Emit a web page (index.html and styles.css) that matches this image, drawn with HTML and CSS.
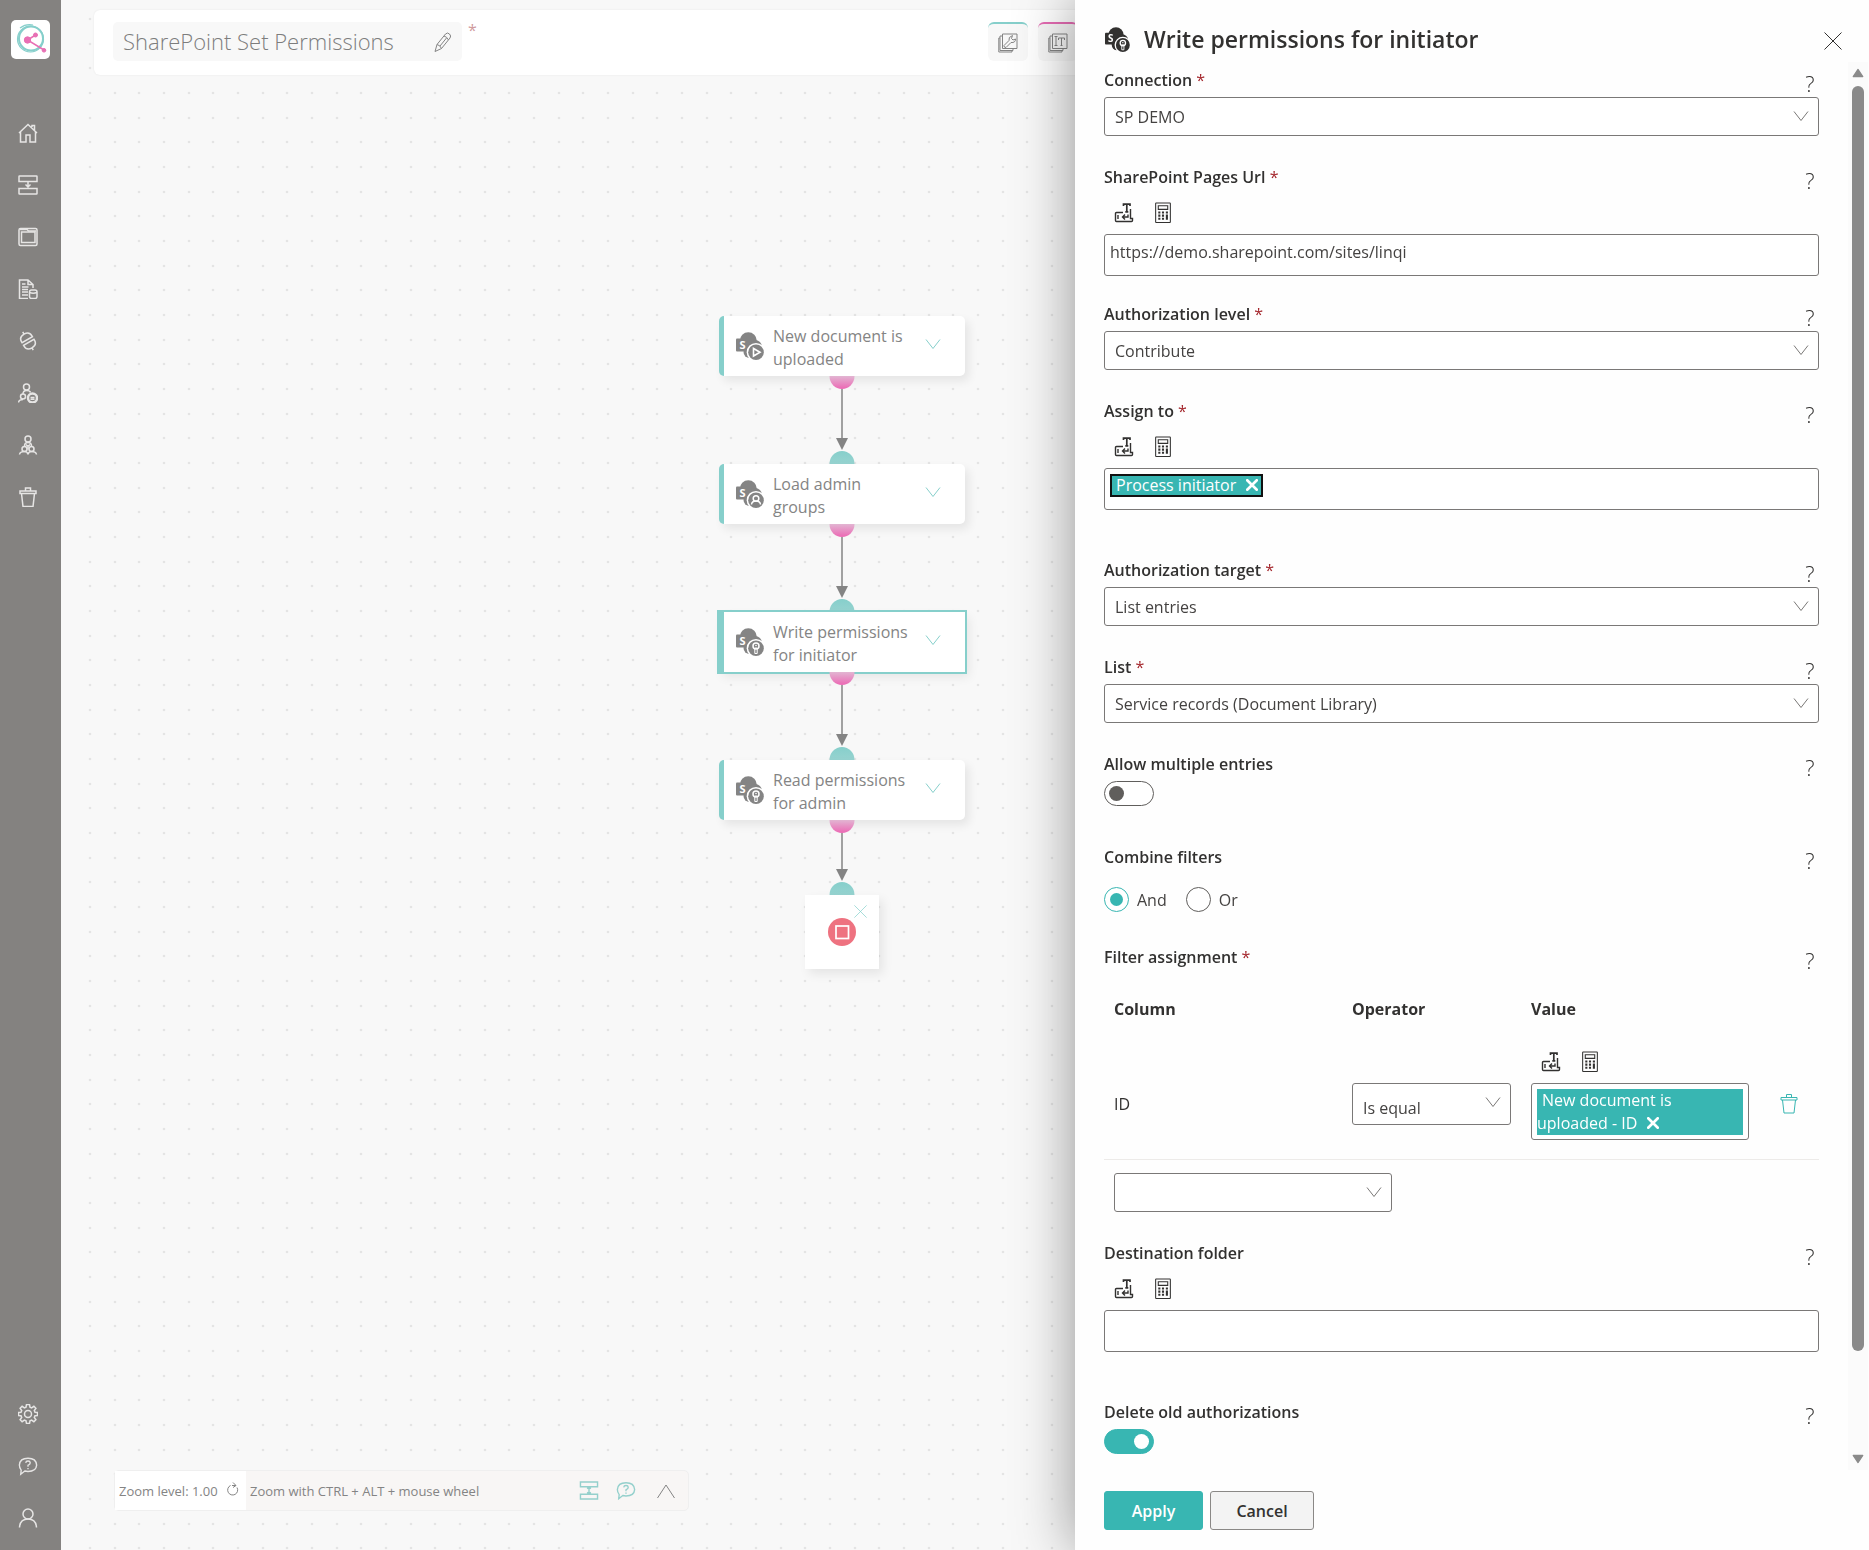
FILE: index.html
```html
<!DOCTYPE html>
<html lang="en">
<head>
<meta charset="utf-8">
<meta name="viewport" content="width=device-width, initial-scale=1">
<title>SharePoint Set Permissions</title>
<link rel="stylesheet" href="styles.css">
</head>
<body>
<svg class="icons" aria-hidden="true">
  <symbol id="i-home" viewBox="0 0 20 20"><path d="M1 10 10 1.500 19 10M2.500 9v10H8v-7h4v7h5.500V9M14 4V2.500h2.500V7"/></symbol>
  <symbol id="i-flow" viewBox="0 0 20 20"><path d="M1.500 1h17q.500 0 .500.500v5H1v-5q0-.500.500-.500zM1 13.500h18v5q0 .500-.500.500h-17q-.500 0-.500-.500zM10 6.500v6M7.500 9.500 10 12l2.500-2.500"/></symbol>
  <symbol id="i-flow2" viewBox="0 0 20 20"><path d="M1 1h18v5H1zM1 14h18v5H1zM10 6v8M8 8l2-1.500L12 8M8 12l2 1.500 2-1.500"/></symbol>
  <symbol id="i-frame" viewBox="0 0 20 20"><rect x="1" y="1.500" width="18" height="17" rx="1.500"/><rect x="3.500" y="5" width="13.500" height="10.500"/><path d="M2 2.500h7l1.500 1.500H18"/></symbol>
  <symbol id="i-doc" viewBox="0 0 20 20"><path d="M10 19.500H1.500V1H10l5 4.500V9M10 1v4.500h5M4 5h3.500M4 8h6.500M4 10.500h6M4 13h6M4 16h6"/><rect x="11.500" y="11" width="7.500" height="8.500" rx="2"/><path d="M11.500 13.500q3.700 1.500 7.500 0"/></symbol>
  <symbol id="i-plug" viewBox="0 0 20 20"><g transform="rotate(-30 10 10)"><path d="M4 8.500V7.500Q4 2 10 2t6 5.500v1zM4 11.500v1Q4 18 10 18t6-5.500v-1zM10 2v-2.500M10 18v2.500"/></g></symbol>
  <symbol id="i-team" viewBox="0 0 20 20"><circle cx="10" cy="4" r="3"/><path d="M6.500 11Q6.500 7.500 10 7.500t3.500 3.500M8 9.500l2 2 2-2M10 11.500v3"/><circle cx="6.500" cy="14" r="2.500"/><circle cx="13.500" cy="14" r="2.500"/><path d="M1.500 19.500q.500-3 5-3 3 0 3.500 3 .500-3 3.500-3 4.500 0 5 3"/></symbol>
  <symbol id="i-teamgear" viewBox="0 0 20 20"><circle cx="8.500" cy="4" r="3"/><path d="M5 11q0-3.500 3.500-3.500t4 2"/><circle cx="5" cy="13.500" r="2.500"/><path d="M.500 19.500q.500-3 4.500-3"/><circle cx="14.500" cy="15" r="4.500" stroke-width="2.500"/><path d="M12.500 14.500h4M12.500 16.200h4"/></symbol>
  <symbol id="i-trash" viewBox="0 0 20 20"><path d="M2 4h16v2.500H2zM3.500 6.500l1.500 13h10l1.500-13M7.500 4V1h5v3"/></symbol>
  <symbol id="i-gear" viewBox="0 0 20 20"><circle cx="10" cy="10" r="3.500"/><path d="M8.500.500h3l.500 2.700 1.600.700 2.300-1.600 2 2-1.600 2.300.700 1.600 2.500.300v3l-2.500.300-.700 1.600 1.600 2.300-2 2-2.300-1.600-1.600.700-.500 2.700h-3L8 16.800l-1.600-.700-2.300 1.600-2-2 1.600-2.300L3 11.800.500 11.500v-3L3 8.200l.700-1.600L2.100 4.300l2-2 2.300 1.600L8 3.200z"/></symbol>
  <symbol id="i-chat" viewBox="0 0 22 20"><path d="M3.500 14.500Q1.500 12 1.500 9 2 1.500 11 1.500T20.500 9q-.500 7-9.500 7-2 0-3.500-.500L3 19z"/><path d="M8.500 6.500Q8.700 4.500 11 4.500t2.500 2Q13.500 8 11 9.200v1.500M11 12.300v1.200"/></symbol>
  <symbol id="i-user" viewBox="0 0 20 20"><circle cx="10" cy="6" r="5"/><path d="M1.500 19.500Q2 11 10 11t8.500 8.500"/></symbol>
  <symbol id="i-pencil" viewBox="0 0 18 20"><path d="M1 19.500 3 12.500 11.500 2q2-2 4 0t.500 4L7.500 16.500zM3 12.500q3 .500 4.500 4M10 4q3 .700 4.500 4M12.500 6 6 14"/></symbol>
  <symbol id="i-tool" viewBox="0 0 20 20"><path d="M4.500 1h14.500v14.500H4.500zM4.500 3H2v14.500h13v-2M2 5H.800v14h13.200v-1.500M6 12.500 11 7.500M8 14.500l5-5M6 12.500q-.500 2 2 2M11 7.500q-1-3.500 3.500-5L13.500 5.500l1.500 1.500L17.500 6q0 4-4.500 3.500"/></symbol>
  <symbol id="i-text" viewBox="0 0 20 20"><path d="M4.500 1h14.500v14.500H4.500zM4.500 3H2v14.500h13v-2M2 5H.800v14h13.200v-1.500M6.500 3.500h3M8 3.500v9M6.500 12.500h3M10.500 7V5h6v2M13.500 5v7.500M12.500 12.500h2"/></symbol>
  <symbol id="i-token" viewBox="0 0 20 20"><path d="M9.500 3.500V1.700h6.500v1.800M12.800 1.700v7.800M11.300 9.300h3" stroke-width="1.700"/><path d="M9 10H2.500Q1.500 10 1.500 11v7q0 1 1 1h15q1 0 1-1v-2h-2V6.500M4 12.500V16.500M14 12v2.500H8.500M11 12 8.500 14.500l2.500 2.500" stroke-width="1.400"/></symbol>
  <symbol id="i-calc" viewBox="0 0 16 20"><rect x="1" y="1" width="14" height="18.500" rx=".5"/><path d="M3.500 3.500h9v3.500h-9z"/><path d="M3.500 10h2M7 10h2M10.700 10h2M3.500 13h2M7 13h2M3.500 16h2M7 16h2M11.700 12v5" stroke-width="2"/></symbol>
  <symbol id="i-down" viewBox="0 0 16 10"><path d="M1 .500 8 9.500 15 .500"/></symbol>
  <symbol id="i-up" viewBox="0 0 20 16"><path d="M1.500 15 10 2l8.500 13"/></symbol>
  <symbol id="i-close" viewBox="0 0 18 18"><path d="M.500.500 17.500 17.500M17.500.500.500 17.500"/></symbol>
  <symbol id="i-reload" viewBox="0 0 14 14"><path d="M4.500 3.500A5 5 0 1 0 11 5.500M7 .500l3 3-3 2M10 3.500H6"/></symbol>
  <symbol id="i-sp" viewBox="0 0 28 28">
    <circle cx="12.300" cy="8.700" r="8.500" fill="currentColor" stroke="none"/>
    <circle cx="19" cy="15" r="7" fill="currentColor" stroke="none"/>
    <circle cx="13.500" cy="20" r="6" fill="currentColor" stroke="none"/>
    <rect y="6.500" width="10.500" height="13" rx="1" fill="currentColor" stroke="none"/>
    <circle cx="20" cy="20.200" r="9.300" fill="#fff" stroke="none"/>
    <circle cx="20" cy="20.200" r="7.800" fill="currentColor" stroke="none"/>
    <text x="6.500" y="17" class="sp-letter">S</text>
  </symbol>
  <symbol id="i-key" viewBox="0 0 28 28"><circle cx="20" cy="18" r="3" fill="none" stroke="#fff" stroke-width="1.500"/><path d="M18.800 20v5.500h2.400V20z" fill="none" stroke="#fff" stroke-width="1"/><circle cx="20" cy="17.500" r=".8" fill="#fff" stroke="none"/></symbol>
  <symbol id="i-play" viewBox="0 0 28 28"><path d="M17.500 16.500v7.500l6.500-3.700z" fill="none" stroke="#fff" stroke-width="1.600"/></symbol>
  <symbol id="i-person" viewBox="0 0 28 28"><circle cx="20" cy="18.500" r="2.800" fill="none" stroke="#fff" stroke-width="1.500"/><path d="M15.500 24.500q.5-3.500 4.500-3.500t4.500 3.500" fill="none" stroke="#fff" stroke-width="1.500"/></symbol>
</svg>

<div class="app">
  <nav class="rail" aria-label="Main">
    <a class="logo" href="#" aria-label="Start">
      <svg viewBox="0 0 39 39"><g fill="none" stroke="#86cfcb"><circle cx="20" cy="18.500" r="12" stroke-width="2"/><circle cx="19.500" cy="19" r="13" stroke-width="1.200"/><path d="M9 8Q15 3.500 22 5" stroke-width="1.200"/></g><g stroke="#e86fb4" fill="#e86fb4"><path d="M24.500 15 16.500 20 33 30" fill="none" stroke-width="1.500"/><circle cx="16.500" cy="20" r="3.200"/><circle cx="24.500" cy="15" r="2"/><circle cx="33" cy="30.300" r="1.800"/></g></svg>
    </a>
    <div class="rail-group">
      <a href="#" aria-label="Home"><svg><use href="#i-home"/></svg></a>
      <a href="#" aria-label="Processes"><svg><use href="#i-flow"/></svg></a>
      <a href="#" aria-label="Forms"><svg><use href="#i-frame"/></svg></a>
      <a href="#" aria-label="Data"><svg><use href="#i-doc"/></svg></a>
      <a href="#" aria-label="Connections"><svg><use href="#i-plug"/></svg></a>
      <a href="#" aria-label="Group settings"><svg><use href="#i-teamgear"/></svg></a>
      <a href="#" aria-label="Groups"><svg><use href="#i-team"/></svg></a>
      <a href="#" aria-label="Trash"><svg><use href="#i-trash"/></svg></a>
    </div>
    <div class="rail-group rail-bottom">
      <a href="#" aria-label="Settings"><svg><use href="#i-gear"/></svg></a>
      <a href="#" aria-label="Help"><svg><use href="#i-chat"/></svg></a>
      <a href="#" aria-label="Account"><svg><use href="#i-user"/></svg></a>
    </div>
  </nav>

  <main class="stage">
    <svg class="dots" aria-hidden="true">
      <defs><pattern id="grid" width="74" height="74" patternUnits="userSpaceOnUse" x="0" y="6">
        <g fill="#e4e4e4"><circle cx="13" cy="13" r="1.300"/><circle cx="38" cy="13" r="1.300"/><circle cx="62" cy="13" r="1.300"/><circle cx="13" cy="38" r="1.300"/><circle cx="38" cy="38" r="1.300"/><circle cx="62" cy="38" r="1.300"/><circle cx="13" cy="62" r="1.300"/><circle cx="38" cy="62" r="1.300"/><circle cx="62" cy="62" r="1.300"/></g>
      </pattern></defs>
      <rect width="100%" height="100%" fill="url(#grid)"/>
    </svg>

    <header class="topbar">
      <div class="title-box">
        <h1>SharePoint Set Permissions</h1>
        <button type="button" aria-label="Rename"><svg><use href="#i-pencil"/></svg></button>
      </div>
      <span class="unsaved">*</span>
      <div class="tools">
        <button type="button" class="tool teal" aria-label="Tools"><svg><use href="#i-tool"/></svg></button>
        <button type="button" class="tool pink" aria-label="Texts"><svg><use href="#i-text"/></svg></button>
      </div>
    </header>

    <div class="flow">
      <svg class="shared" aria-hidden="true">
        <defs>
          <linearGradient id="pink" x1="0" y1="0" x2="0" y2="1"><stop offset="0" stop-color="#e2b5d2"/><stop offset="1" stop-color="#ec68b4"/></linearGradient>
          <linearGradient id="teal" x1="0" y1="0" x2="0" y2="1"><stop offset="0" stop-color="#86cfcb"/><stop offset="1" stop-color="#97d3d0"/></linearGradient>
        </defs>
        <symbol id="link-art" viewBox="0 0 26 88">
          <path d="M13 13v50" stroke="#848484" stroke-width="1.500"/><path d="M7 62h12l-6 12z" fill="#848484"/>
          <path d="M.500 0h25a12.500 13 0 0 1-25 0z" fill="url(#pink)"/><path d="M.500 88a12.500 13 0 0 1 25 0z" fill="url(#teal)"/>
        </symbol>
      </svg>
      <article class="node n1"><svg class="sp"><use href="#i-sp"/><use href="#i-play"/></svg><span>New document is uploaded</span><svg class="chev"><use href="#i-down"/></svg></article>
      <svg class="link l1" viewBox="0 0 26 88"><use href="#link-art"/></svg>
      <article class="node n2"><svg class="sp"><use href="#i-sp"/><use href="#i-person"/></svg><span>Load admin groups</span><svg class="chev"><use href="#i-down"/></svg></article>
      <svg class="link l2" viewBox="0 0 26 88"><use href="#link-art"/></svg>
      <article class="node n3 selected"><svg class="sp"><use href="#i-sp"/><use href="#i-key"/></svg><span>Write permissions for initiator</span><svg class="chev"><use href="#i-down"/></svg></article>
      <svg class="link l3" viewBox="0 0 26 88"><use href="#link-art"/></svg>
      <article class="node n4"><svg class="sp"><use href="#i-sp"/><use href="#i-key"/></svg><span>Read permissions for admin</span><svg class="chev"><use href="#i-down"/></svg></article>
      <svg class="link l4" viewBox="0 0 26 75">
        <path d="M13 13v38" stroke="#848484" stroke-width="1.500"/><path d="M7 49h12l-6 12z" fill="#848484"/>
        <path d="M.500 0h25a12.500 13 0 0 1-25 0z" fill="url(#pink)"/><path d="M.500 75a12.500 13 0 0 1 25 0z" fill="url(#teal)"/>
      </svg>
      <article class="end-node">
        <button type="button" aria-label="Remove"><svg><use href="#i-close"/></svg></button>
        <svg class="stop" viewBox="0 0 28 28"><circle cx="14" cy="14" r="14" fill="#ee7280"/><rect x="8" y="8" width="12.500" height="12.500" fill="none" stroke="#fff" stroke-width="1.700"/></svg>
      </article>
    </div>

    <footer class="zoombar">
      <div class="zoom-level"><span>Zoom level: 1.00</span><button type="button" aria-label="Reset zoom"><svg><use href="#i-reload"/></svg></button></div>
      <span class="zoom-hint">Zoom with CTRL + ALT + mouse wheel</span>
      <button type="button" class="zb" aria-label="Arrange"><svg><use href="#i-flow2"/></svg></button>
      <button type="button" class="zb" aria-label="Comments"><svg><use href="#i-chat"/></svg></button>
      <button type="button" class="zb last" aria-label="Expand"><svg><use href="#i-up"/></svg></button>
    </footer>
  </main>

  <aside class="panel" aria-labelledby="panel-title">
    <header class="panel-head">
      <svg class="panel-icon"><use href="#i-sp"/><use href="#i-key"/></svg>
      <h2 id="panel-title">Write permissions for initiator</h2>
      <button type="button" class="close" aria-label="Close"><svg><use href="#i-close"/></svg></button>
    </header>

    <div class="panel-scroll">
      <form class="form" id="settings">
        <div class="field">
          <div class="label-row"><label for="connection">Connection <i>*</i></label><button type="button" class="help">?</button></div>
          <div class="select"><select id="connection"><option>SP DEMO</option></select><svg><use href="#i-down"/></svg></div>
        </div>

        <div class="field text-field">
          <div class="label-row"><label for="url">SharePoint Pages Url <i>*</i></label><button type="button" class="help">?</button></div>
          <div class="inserts"><button type="button" aria-label="Insert token"><svg><use href="#i-token"/></svg></button><button type="button" aria-label="Insert formula"><svg><use href="#i-calc"/></svg></button></div>
          <input class="editor" id="url" type="text" value="https://demo.sharepoint.com/sites/linqi">
        </div>

        <div class="field">
          <div class="label-row"><label for="level">Authorization level <i>*</i></label><button type="button" class="help">?</button></div>
          <div class="select"><select id="level"><option>Contribute</option></select><svg><use href="#i-down"/></svg></div>
        </div>

        <div class="field roomy">
          <div class="label-row"><span id="assign">Assign to <i>*</i></span><button type="button" class="help">?</button></div>
          <div class="inserts"><button type="button" aria-label="Insert token"><svg><use href="#i-token"/></svg></button><button type="button" aria-label="Insert formula"><svg><use href="#i-calc"/></svg></button></div>
          <div class="editor" role="textbox" aria-labelledby="assign" tabindex="0"><span class="token framed">Process initiator<button type="button" aria-label="Remove"><svg><use href="#i-close"/></svg></button></span></div>
        </div>

        <div class="field">
          <div class="label-row"><label for="target">Authorization target <i>*</i></label><button type="button" class="help">?</button></div>
          <div class="select"><select id="target"><option>List entries</option></select><svg><use href="#i-down"/></svg></div>
        </div>

        <div class="field">
          <div class="label-row"><label for="list">List <i>*</i></label><button type="button" class="help">?</button></div>
          <div class="select"><select id="list"><option>Service records (Document Library)</option></select><svg><use href="#i-down"/></svg></div>
        </div>

        <div class="field switch-field">
          <div class="label-row"><label for="multi">Allow multiple entries</label><button type="button" class="help">?</button></div>
          <input class="toggle" id="multi" type="checkbox">
        </div>

        <div class="field radio-field" role="radiogroup" aria-labelledby="combine">
          <div class="label-row"><span id="combine">Combine filters</span><button type="button" class="help">?</button></div>
          <div class="radios">
            <label><input type="radio" name="combine" checked>And</label>
            <label><input type="radio" name="combine">Or</label>
          </div>
        </div>

        <div class="field">
          <div class="label-row"><span id="filter">Filter assignment <i>*</i></span><button type="button" class="help">?</button></div>
          <table class="filters" aria-labelledby="filter">
            <colgroup><col class="c-col"><col class="c-op"><col class="c-val"><col></colgroup>
            <thead><tr><th>Column</th><th>Operator</th><th>Value</th><th></th></tr></thead>
            <tbody><tr>
              <td class="low">ID</td>
              <td class="low"><div class="select tall"><select aria-label="Operator"><option>Is equal</option></select><svg><use href="#i-down"/></svg></div></td>
              <td>
                <div class="inserts"><button type="button" aria-label="Insert token"><svg><use href="#i-token"/></svg></button><button type="button" aria-label="Insert formula"><svg><use href="#i-calc"/></svg></button></div>
                <div class="editor value" role="textbox" aria-label="Value" tabindex="0"><span class="token block">New document is uploaded - ID<button type="button" aria-label="Remove"><svg><use href="#i-close"/></svg></button></span></div>
              </td>
              <td class="low"><button type="button" class="delete" aria-label="Delete row"><svg><use href="#i-trash"/></svg></button></td>
            </tr></tbody>
          </table>
          <div class="select add"><select aria-label="Add column"><option></option></select><svg><use href="#i-down"/></svg></div>
        </div>

        <div class="field roomy">
          <div class="label-row"><label for="folder">Destination folder</label><button type="button" class="help">?</button></div>
          <div class="inserts"><button type="button" aria-label="Insert token"><svg><use href="#i-token"/></svg></button><button type="button" aria-label="Insert formula"><svg><use href="#i-calc"/></svg></button></div>
          <input class="editor" id="folder" type="text">
        </div>

        <div class="field last">
          <div class="label-row"><label for="old">Delete old authorizations</label><button type="button" class="help">?</button></div>
          <input class="toggle" id="old" type="checkbox" checked>
        </div>
      </form>
      <div class="scrollbar" aria-hidden="true">
        <svg viewBox="0 0 10 8"><path d="M5 1 9 7H1z"/></svg>
        <div class="track"><div class="thumb"></div></div>
        <svg viewBox="0 0 10 8"><path d="M5 7 9 1H1z"/></svg>
      </div>
    </div>

    <footer class="panel-foot">
      <button class="btn primary" type="submit" form="settings">Apply</button>
      <button class="btn" type="button">Cancel</button>
    </footer>
  </aside>
</div>
</body>
</html>
```
FILE: styles.css
```css
* { box-sizing: border-box; }

body {
  margin: 0;
  font-family: "Open Sans", "Noto Sans", sans-serif;
  font-size: 16px;
  color: #323130;
  background: #f8f8f8;
}

button, input, select { font: inherit; color: inherit; }
button { padding: 0; border: 0; background: none; display: flex; align-items: center; justify-content: center; }
svg { display: block; fill: none; stroke: currentColor; flex: none; }
h1, h2 { margin: 0; }
.icons { display: none; }
.shared { position: absolute; width: 0; height: 0; }
.sp-letter { font: 700 11px "Open Sans", sans-serif; fill: #fff; stroke: none; text-anchor: middle; }

.app { display: flex; min-height: 100vh; }

/* left rail */
.rail {
  width: 61px;
  flex: none;
  background: #848280;
  color: #e6e5e4;
  display: flex;
  flex-direction: column;
  padding: 20px 0 6px;
}
.logo { width: 39px; height: 39px; margin: 0 0 48px 11px; background: #fff; border-radius: 5px; }
.logo svg { width: 39px; height: 39px; }
.rail-group a { display: flex; align-items: center; width: 56px; height: 52px; justify-content: center; color: inherit; }
.rail-group svg { width: 20px; height: 20px; stroke-width: 1.5; overflow: visible; }
.rail-bottom { margin-top: auto; }

/* designer */
.stage { flex: 1; position: relative; min-width: 0; display: flex; flex-direction: column; overflow: hidden; color: #848484; }
.dots { position: absolute; top: 0; left: 16px; width: 100%; height: 100%; stroke: none; }
.topbar {
  position: relative;
  display: flex;
  align-items: flex-start;
  height: 65px;
  margin: 10px 0 0 33px;
  padding: 12px 0 0 19px;
  background: #fff;
  border-radius: 6px 0 0 6px;
  box-shadow: 0 0 2px rgba(0, 0, 0, .08);
}
.title-box { display: flex; align-items: center; justify-content: space-between; width: 349px; height: 39px; padding: 0 10px; background: #f8f8f8; border-radius: 5px; }
h1 { font-size: 22px; font-weight: 300; line-height: 41px; white-space: nowrap; color: #7d7d7d; }
.title-box svg { width: 18px; height: 20px; }
.unsaved { margin-left: 6px; font-size: 16px; line-height: 16px; color: #cf9a9d; width: 10px; }
.tools { display: flex; gap: 10px; margin-left: 510px; }
.tool { width: 40px; height: 39px; background: #f8f8f8; border-top: 2px solid; border-radius: 6px; }
.tool svg { width: 20px; height: 20px; color: #848484; }
.tool.teal { border-color: #86cfcb; }
.tool.pink { border-color: #e56cb3; }

.flow { flex: 1; position: relative; }
.node {
  position: absolute;
  left: 658px;
  width: 246px;
  height: 60px;
  padding-left: 12px;
  display: flex;
  align-items: center;
  border-left: 5px solid #86cfcb;
  border-radius: 5px;
  background: #fff;
  box-shadow: 4px 5px 10px rgba(0, 0, 0, .08);
}
.node span { width: 144px; margin-left: 9px; padding-top: 3px; line-height: 23px; }
.node .sp { width: 28px; height: 28px; stroke: none; }
.node .chev { width: 16px; height: 10px; margin: 0 0 4px 8px; color: #86cfcb; }
.node.selected { outline: 2px solid #86cfcb; border-radius: 0; }
.n1 { top: 241px; }
.n2 { top: 389px; }
.n3 { top: 537px; }
.n4 { top: 685px; }
.link { position: absolute; left: 768px; width: 26px; height: 88px; stroke: none; }
.l1 { top: 301px; }
.l2 { top: 449px; }
.l3 { top: 597px; }
.l4 { top: 745px; height: 75px; }
.end-node {
  position: absolute;
  left: 744px;
  top: 820px;
  width: 74px;
  height: 74px;
  display: flex;
  flex-direction: column;
  align-items: center;
  padding-top: 10px;
  background: #fff;
  box-shadow: 4px 5px 10px rgba(0, 0, 0, .08);
}
.end-node button { margin: 0 12px 0 auto; color: #86cfcb; }
.end-node button svg { width: 13px; height: 13px; }
.stop { width: 28px; height: 28px; stroke: none; }

.zoombar {
  position: relative;
  align-self: flex-start;
  display: flex;
  align-items: center;
  width: 575px;
  height: 41px;
  margin: 0 0 39px 53px;
  background: #f8f6f5;
  border: 1px solid #efefef;
  border-radius: 5px;
  font-size: 13px;
}
.zoom-level { display: flex; align-items: center; gap: 8px; width: 131px; height: 39px; padding-left: 4px; background: #fff; }
.zoom-level svg { width: 14px; height: 14px; }
.zoom-level button { padding-bottom: 4px; }
.zoom-hint { flex: 1; padding-left: 4px; }
.zb { width: 37px; height: 39px; color: #94d0cc; }
.zb svg { width: 20px; height: 19px; stroke-width: 1.5; }
.zb.last { width: 44px; color: #848484; }
.zb.last svg { height: 16px; stroke-width: 1; }

/* settings drawer */
.panel {
  position: fixed;
  top: 0;
  right: 0;
  bottom: 0;
  width: 794px;
  max-width: 100%;
  display: flex;
  flex-direction: column;
  background: #fefefe;
  box-shadow: 0 0 56px rgba(0, 0, 0, .42);
}
.panel-head { display: flex; align-items: flex-start; height: 62px; padding: 18px 27px 0 30px; }
.panel-icon { width: 25px; height: 25px; margin-top: 9px; stroke: none; }
h2 { flex: 1; margin: 6px 0 0 14px; font-size: 23px; line-height: 30px; font-weight: 600; }
.close { margin-top: 14px; }
.close svg { width: 18px; height: 18px; }

.panel-scroll { flex: 1; min-height: 0; display: flex; }
.form { flex: 1; min-width: 0; padding: 6px 29px 0 29px; overflow-y: auto; scrollbar-width: none; }
.field { margin-bottom: 29px; }
.text-field { margin-bottom: 26px; }
.field.roomy { margin-bottom: 48px; }
.switch-field { margin-bottom: 39px; }
.radio-field { margin-bottom: 33px; }
.field.last { margin-bottom: 0; }
.label-row { display: flex; justify-content: space-between; height: 24px; margin-bottom: 5px; font-weight: 600; line-height: 24px; }
.label-row i { font-style: normal; font-weight: 400; color: #a4262c; }
.help { width: 18px; height: 30px; font-size: 22px; font-weight: 300; line-height: 30px; }

.select { position: relative; height: 39px; }
.select select {
  appearance: none;
  width: 100%;
  height: 100%;
  padding: 0 36px 0 10px;
  border: 1px solid #7a7877;
  border-radius: 3px;
  background: #fff;
  color: #444241;
}
.select svg { position: absolute; right: 10px; top: 14px; width: 16px; height: 10px; color: #7a7877; pointer-events: none; }
.select.tall { height: 42px; }
.select.tall select { padding-top: 3px; }

.inserts { display: flex; gap: 19px; height: 45px; margin-top: -5px; padding: 1px 0 0 10px; align-items: center; }
.inserts svg { width: 20px; height: 21px; }
.editor {
  display: block;
  width: 100%;
  height: 42px;
  padding: 5px 5px 11px;
  border: 1px solid #7a7877;
  border-radius: 3px;
  background: #fff;
  color: #444241;
}
.token { color: #fff; background: #38b6b2; line-height: 23px; }
.token button { display: inline-flex; margin-left: 10px; }
.token button svg { width: 12px; height: 12px; stroke-width: 4; }
.framed { display: inline-block; height: 23px; padding: 0 3px 0 4px; border: 2px solid #111; line-height: 19px; vertical-align: top; }
.editor.value { height: 57px; padding: 5px; }
.block { display: block; text-indent: 5px; }

.toggle { appearance: none; display: block; width: 50px; height: 25px; margin: 0; padding: 4px; border: 1px solid #605e5c; border-radius: 13px; background: #fff; }
.toggle::before { content: ""; display: block; width: 15px; height: 15px; border-radius: 50%; background: #605e5c; }
.toggle:checked { background: #38b6b2; border-color: #38b6b2; }
.toggle:checked::before { margin-left: auto; background: #fff; }

.radios { display: flex; gap: 19px; padding-top: 13px; color: #444241; }
.radios label { display: flex; align-items: center; gap: 8px; height: 25px; }
.radios input { appearance: none; width: 25px; height: 25px; margin: 0; border: 1px solid #605e5c; border-radius: 50%; background: #fff; display: grid; place-items: center; }
.radios input:checked { border-color: #38b6b2; }
.radios input:checked::before { content: ""; width: 13px; height: 13px; border-radius: 50%; background: #38b6b2; }

.filters { width: 100%; margin-top: 20px; table-layout: fixed; border-collapse: collapse; text-align: left; }
.c-col, .c-val { width: 238px; }
.c-op { width: 179px; }
.filters th { height: 40px; padding: 0 10px; font-weight: 700; }
.filters td { padding: 14px 10px 19px; vertical-align: top; border-bottom: 1px solid #edebe9; line-height: 42px; }
.filters td.low { padding-top: 54px; }
.delete { width: 40px; height: 40px; color: #38b6b2; }
.delete svg { width: 20px; height: 21px; }
.add { width: 278px; margin: 13px 0 0 10px; }

.scrollbar { width: 20px; margin-right: 1px; padding: 6px 0; display: flex; flex-direction: column; align-items: center; background: #fbfbfb; }
.scrollbar svg { width: 12px; height: 10px; fill: #8a8a8a; stroke: #8a8a8a; stroke-linejoin: round; }
.track { flex: 1; width: 12px; padding: 8px 0; }
.thumb { height: 93%; border-radius: 6px; background: #8a8a8a; }

.panel-foot { display: flex; gap: 7px; height: 80px; padding: 21px 29px 0; }
.btn { width: 104px; height: 39px; border: 1px solid #8a8886; border-radius: 3px; background: #f3f3f3; font-weight: 600; }
.btn.primary { width: 99px; border-color: #38b6b2; background: #38b6b2; color: #fff; }
```
